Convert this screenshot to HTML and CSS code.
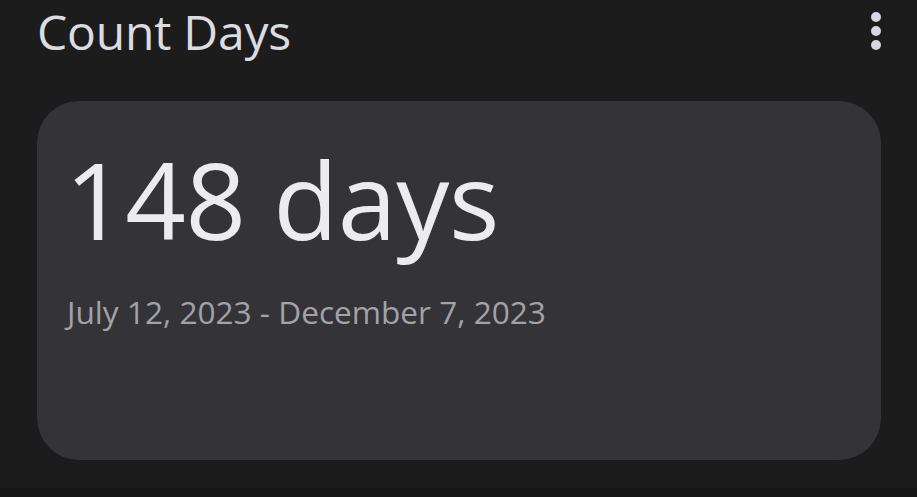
FILE: index.html
```html
<!DOCTYPE html>
<html>
<head>
<meta charset="utf-8">
<link rel="stylesheet" href="styles.css">
</head>
<body>
<div class="app">
  <header class="bar">
    <h1 class="title">Count Days</h1>
    <svg class="more" width="12" height="40" viewBox="0 0 12 40">
      <circle cx="6" cy="6" r="5"/>
      <circle cx="6" cy="20" r="5"/>
      <circle cx="6" cy="34" r="5"/>
    </svg>
  </header>
  <section class="card">
    <div class="count">148 days</div>
    <div class="range">July 12, 2023 - December 7, 2023</div>
  </section>
</div>
<div class="bottom"></div>
</body>
</html>
```
FILE: styles.css
```css
html, body {
  margin: 0;
  padding: 0;
  background: #1c1c1d;
  height: 100%;
  overflow: hidden;
}
body {
  font-family: "Open Sans", "Noto Sans", sans-serif;
  display: flex;
  flex-direction: column;
}
.app {
  flex: 1;
  padding: 0 36px 0 37px;
}
.bar {
  display: flex;
  justify-content: space-between;
  align-items: flex-start;
  height: 101px;
}
.title {
  margin: 0;
  margin-top: 0;
  font-weight: 400;
  font-size: 48px;
  line-height: 64px;
  color: #dcdce0;
  letter-spacing: -0.2px;
}
.more {
  fill: #d6d6e4;
  margin-top: 11px;
  margin-right: -1px;
}
.card {
  background: #333338;
  border-radius: 42px;
  height: 359px;
  padding: 0 28px;
  box-sizing: border-box;
}
.count {
  padding-top: 28px;
  font-size: 106px;
  line-height: 140px;
  color: #ececef;
  letter-spacing: -0.3px;
}
.range {
  margin-top: 21px;
  padding-left: 2px;
  font-size: 31.6px;
  line-height: 44px;
  color: #a2a2a7;
}
.bottom {
  height: 9px;
  background: #161617;
}
```
